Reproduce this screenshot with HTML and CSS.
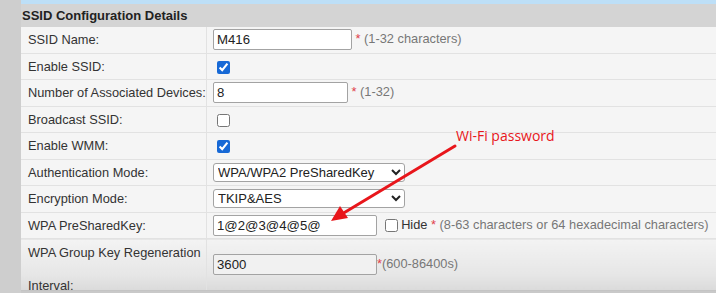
FILE: index.html
```html
<!DOCTYPE html>
<html lang="en">
<head>
  <meta charset="UTF-8" />
  <title>SSID Configuration</title>
  <link rel="stylesheet" href="styles.css">
</head>
<body>
  <div class="page">
    <div class="topbar"></div>
    <div class="section-title">SSID Configuration Details</div>
    <table class="config">
      <tr>
        <td class="label">SSID Name:</td>
        <td class="value"><input type="text" class="w-ssid" value="M416"> <span class="req">*</span> <span class="hint">(1-32 characters)</span></td>
      </tr>
      <tr>
        <td class="label">Enable SSID:</td>
        <td class="value"><input type="checkbox" checked></td>
      </tr>
      <tr>
        <td class="label">Number of Associated Devices:</td>
        <td class="value"><input type="text" class="w-num" value="8"> <span class="req">*</span> <span class="hint">(1-32)</span></td>
      </tr>
      <tr>
        <td class="label">Broadcast SSID:</td>
        <td class="value"><input type="checkbox"></td>
      </tr>
      <tr>
        <td class="label">Enable WMM:</td>
        <td class="value"><input type="checkbox" checked></td>
      </tr>
      <tr>
        <td class="label">Authentication Mode:</td>
        <td class="value">
          <select>
            <option>WPA/WPA2 PreSharedKey</option>
          </select>
        </td>
      </tr>
      <tr>
        <td class="label">Encryption Mode:</td>
        <td class="value">
          <select>
            <option>TKIP&amp;AES</option>
          </select>
        </td>
      </tr>
      <tr>
        <td class="label">WPA PreSharedKey:</td>
        <td class="value"><input type="text" class="w-key" value="1@2@3@4@5@"> <input type="checkbox" class="hide-box"> <span class="hide-text">Hide</span> <span class="req">*</span> <span class="hint">(8-63 characters or 64 hexadecimal characters)</span></td>
      </tr>
      <tr class="tall">
        <td class="label"><div class="two-line">WPA Group Key Regeneration<br>Interval:</div></td>
        <td class="value"><input type="text" class="w-key" value="3600"><span class="req">*</span><span class="hint">(600-86400s)</span></td>
      </tr>
    </table>

    <div class="note">Wi-Fi password</div>
    <svg class="arrow" width="716" height="293" viewBox="0 0 716 293">
      <line x1="455" y1="146" x2="342" y2="214" stroke="#e8161b" stroke-width="3" stroke-linecap="round"/>
      <polygon points="331,221 340,206 348,218" fill="#e8161b"/>
    </svg>
  </div>
</body>
</html>
```

FILE: styles.css
```css
body {
  margin: 0;
  background: #cecece;
  font-family: "Liberation Sans", Arial, sans-serif;
  color: #333;
  overflow: hidden;
}
.page {
  margin-left: 21px;
  background: #c9c9c9;
  height: 293px;
}
.topbar {
  height: 4px;
  background: #bddff7;
}
.section-title {
  height: 23px;
  line-height: 23px;
  padding-left: 1px;
  background: #d4d4d4;
  font-weight: bold;
  font-size: 13px;
  color: #222;
}
.config {
  width: 100%;
  border-collapse: collapse;
  font-size: 12.8px;
  background: #f5f5f5;
}
.config td {
  height: 25.5px;
  padding: 0;
  border-bottom: 1px solid #e2e2e2;
}
.config .label {
  width: 178px;
  padding-left: 7px;
  border-right: 1px solid #e2e2e2;
}
.config .value {
  padding-left: 6px;
  color: #777;
}
.config input[type="text"] {
  box-sizing: border-box;
  height: 21px;
  padding: 0 3px;
  border: 1px solid #a3a3a3;
  border-radius: 2px;
  font-family: "Liberation Sans", Arial, sans-serif;
  font-size: 13.2px;
  color: #222;
  background: #fff;
  vertical-align: middle;
  margin: 0;
}
.w-ssid { width: 139px; }
.w-num { width: 135px; }
.w-key { width: 164px; }
.config input[type="checkbox"] {
  margin: 0 0 0 4px;
  width: 13px;
  height: 13px;
  vertical-align: middle;
  accent-color: #1769d6;
}
.config .hide-box {
  margin-left: 3px;
}
.config select {
  width: 192px;
  height: 19px;
  font-family: "Liberation Sans", Arial, sans-serif;
  font-size: 13px;
  color: #222;
  border: 1px solid #a3a3a3;
  border-radius: 3px;
  background: #fff;
  vertical-align: middle;
  margin: 0;
}
.req {
  color: #e0404a;
}
.hint {
  color: #777;
}
.hide-text {
  color: #333;
}
.tall td {
  height: 51px;
  background: linear-gradient(#f3f3f3, #e6e6e6 70%, #dadada);
  border-bottom: 1px solid #c4c4c4;
}
.tall .label {
  vertical-align: top;
}
.two-line {
  height: 51px;
  margin-top: -3px;
  line-height: 33px;
}
.tall input[type="text"] {
  background: #f1f1f1;
}
.note {
  position: absolute;
  left: 456px;
  top: 126px;
  font-family: "Open Sans", sans-serif;
  font-size: 14px;
  color: #e8161b;
}
.arrow {
  position: absolute;
  left: 0;
  top: 0;
}
```
